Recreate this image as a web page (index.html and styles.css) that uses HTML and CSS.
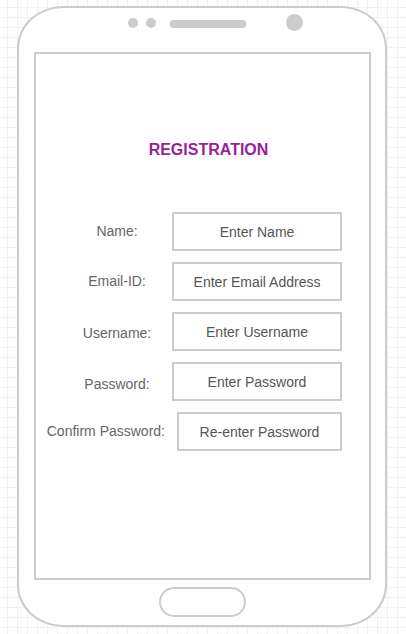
FILE: index.html
```html
<!DOCTYPE html>
<html>
<head>
<meta charset="utf-8">
<link rel="stylesheet" href="styles.css">
</head>
<body>
<div class="phone">
  <div class="phone-top">
    <span class="dot"></span>
    <span class="dot dot--second"></span>
    <span class="speaker"></span>
    <span class="camera"></span>
  </div>
  <div class="screen">
    <h1 class="title">REGISTRATION</h1>
    <div class="form">
      <div class="row">
        <span class="label">Name:</span>
        <span class="field">Enter Name</span>
      </div>
      <div class="row">
        <span class="label">Email-ID:</span>
        <span class="field">Enter Email Address</span>
      </div>
      <div class="row">
        <span class="label label--low">Username:</span>
        <span class="field">Enter Username</span>
      </div>
      <div class="row">
        <span class="label label--lower">Password:</span>
        <span class="field">Enter Password</span>
      </div>
      <div class="row">
        <span class="label label--wide">Confirm Password:</span>
        <span class="field field--narrow">Re-enter Password</span>
      </div>
    </div>
  </div>
  <div class="phone-bottom">
    <span class="home"></span>
  </div>
</div>
</body>
</html>
```
FILE: styles.css
```css
html, body {
  margin: 0;
  padding: 0;
}
body {
  width: 406px;
  height: 634px;
  overflow: hidden;
  font-family: "Liberation Sans", Arial, sans-serif;
  background-color: #ffffff;
  background-image:
    linear-gradient(to right, #f1f1f1 1px, transparent 1px),
    linear-gradient(to bottom, #f1f1f1 1px, transparent 1px);
  background-size: 10px 10px;
  background-position: 7px 7px;
}
.phone {
  box-sizing: border-box;
  margin: 6px 0 0 17px;
  width: 370px;
  height: 621px;
  border: 2px solid #cccccc;
  border-radius: 46px / 42px;
  background: #ffffff;
  display: flex;
  flex-direction: column;
  padding: 0 14px 0 15px;
}
.phone-top {
  height: 44px;
  box-sizing: border-box;
  padding: 8px 0 0 94px;
  display: flex;
  align-items: flex-start;
}
.dot {
  width: 10px;
  height: 10px;
  border-radius: 50%;
  background: #cccccc;
  margin-top: 2px;
}
.dot--second {
  margin-left: 8px;
}
.speaker {
  width: 76px;
  height: 8px;
  border-radius: 3px;
  background: #cccccc;
  margin-left: 14px;
  margin-top: 4px;
}
.camera {
  width: 17px;
  height: 17px;
  border-radius: 50%;
  background: #cccccc;
  margin-left: 40px;
  margin-top: -2px;
}
.screen {
  box-sizing: border-box;
  height: 528px;
  border: 2px solid #cccccc;
  background: #ffffff;
  padding: 0 27px 0 0;
  display: flex;
  flex-direction: column;
}
.title {
  margin: 87px 0 0 39px;
  font-size: 16px;
  line-height: 18px;
  font-weight: bold;
  color: #9b1f98;
  text-align: center;
}
.form {
  margin-top: 53px;
  display: flex;
  flex-direction: column;
  gap: 11px;
}
.row {
  display: flex;
  justify-content: flex-end;
  align-items: center;
  height: 39px;
}
.label {
  width: 110px;
  text-align: center;
  font-size: 14px;
  color: #666666;
  margin-top: -2px;
}
.label--low {
  margin-top: 2px;
}
.label--lower {
  margin-top: 5px;
}
.label--wide {
  width: auto;
  margin-right: 12px;
  margin-top: -2px;
}
.field {
  box-sizing: border-box;
  width: 170px;
  height: 39px;
  border: 2px solid #cccccc;
  display: flex;
  align-items: center;
  justify-content: center;
  font-size: 14px;
  color: #555555;
}
.field--narrow {
  width: 165px;
}
.phone-bottom {
  display: flex;
  justify-content: center;
  padding: 7px 0 0 0;
}
.home {
  box-sizing: border-box;
  width: 87px;
  height: 30px;
  border: 2px solid #cccccc;
  border-radius: 15px;
}
```
